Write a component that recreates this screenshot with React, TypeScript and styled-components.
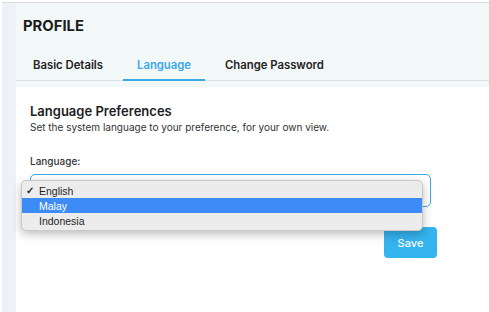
import React from 'react';
import styled, { createGlobalStyle } from 'styled-components';

const GlobalStyle = createGlobalStyle`
  html, body {
    margin: 0;
    padding: 0;
    background: #ffffff;
    font-family: Inter, "Liberation Sans", Arial, sans-serif;
    color: #1d1d1f;
  }
`;

const Page = styled.div`
  width: 489px;
  height: 312px;
  padding: 2px 0 0 2px;
  box-sizing: border-box;
  overflow: hidden;
  display: flex;
  flex-direction: column;
`;

const Frame = styled.div`
  flex: 1;
  display: flex;
  border-top: 1px solid #d8dde1;
`;

const SideStrip = styled.div`
  width: 14px;
  background: #eef1f7;
`;

const Main = styled.div`
  flex: 1;
  display: flex;
  flex-direction: column;
`;

const Header = styled.div`
  background: #f2f7f8;
  padding: 13px 0 6px 0;
`;

const Title = styled.h1`
  margin: 0 0 13px 7px;
  font-size: 14.8px;
  line-height: 20px;
  font-weight: 700;
  color: #1b1b1b;
`;

const TabRow = styled.div`
  display: flex;
  gap: 6px;
  padding-left: 3px;
  border-bottom: 1px solid #d9e1e6;
`;

const Tab = styled.div<{ $active?: boolean }>`
  padding: 8px 14px 6px;
  margin-bottom: -1px;
  font-size: 11.3px;
  line-height: 16px;
  font-weight: 600;
  color: ${p => (p.$active ? '#3aa9e6' : '#222222')};
  border-bottom: 2px solid ${p => (p.$active ? '#3aa9e6' : 'transparent')};
`;

const Card = styled.div`
  flex: 1;
  background: #ffffff;
  padding: 16px 0 0 14px;
`;

const SectionTitle = styled.h2`
  margin: 0;
  font-size: 13px;
  line-height: 17px;
  font-weight: 600;
  color: #1d1d1f;
`;

const SectionHint = styled.p`
  margin: 0;
  font-size: 10px;
  line-height: 14px;
  color: #333333;
`;

const Form = styled.div`
  width: 407px;
  margin-top: 20px;
  display: flex;
  flex-direction: column;
`;

const Label = styled.label`
  font-size: 10px;
  line-height: 14px;
  font-weight: 500;
  color: #333333;
`;

const SelectWrap = styled.div`
  position: relative;
  margin-top: 6px;
  width: 401px;
`;

const SelectBox = styled.div`
  height: 33px;
  box-sizing: border-box;
  border: 1.5px solid #3aa9e6;
  border-radius: 5px;
  background: #ffffff;
`;

const Popup = styled.ul`
  position: absolute;
  left: -9px;
  top: 6px;
  width: 402px;
  margin: 0;
  padding: 2px 0;
  list-style: none;
  background: #ececec;
  border: 1px solid #c9c9c9;
  border-radius: 5px;
  box-sizing: border-box;
  box-shadow: 0 3px 8px rgba(0, 0, 0, 0.22), 0 4px 16px rgba(0, 0, 0, 0.05);
  font-family: "Liberation Sans", Arial, sans-serif;
`;

const Option = styled.li<{ $highlight?: boolean }>`
  display: flex;
  align-items: center;
  height: 15px;
  padding-left: 4px;
  font-size: 10.5px;
  color: ${p => (p.$highlight ? '#ffffff' : '#1f1f1f')};
  background: ${p => (p.$highlight ? '#3d8bf7' : 'transparent')};
`;

const Check = styled.span`
  width: 13px;
  font-size: 10px;
  font-weight: 700;
`;

const SaveButton = styled.button`
  align-self: flex-end;
  margin-top: 20px;
  width: 53px;
  height: 31px;
  border: none;
  border-radius: 4px;
  background: #35b4ef;
  color: #ffffff;
  font-family: Inter, "Liberation Sans", Arial, sans-serif;
  font-size: 11px;
  font-weight: 500;
`;

const languages = ['English', 'Malay', 'Indonesia'];

export default function App() {
  const selected = 'English';
  const hovered = 'Malay';
  return (
    <Page>
      <GlobalStyle />
      <Frame>
        <SideStrip />
        <Main>
          <Header>
            <Title>PROFILE</Title>
            <TabRow>
              <Tab>Basic Details</Tab>
              <Tab $active>Language</Tab>
              <Tab>Change Password</Tab>
            </TabRow>
          </Header>
          <Card>
            <SectionTitle>Language Preferences</SectionTitle>
            <SectionHint>Set the system language to your preference, for your own view.</SectionHint>
            <Form>
              <Label>Language:</Label>
              <SelectWrap>
                <SelectBox />
                <Popup>
                  {languages.map(lang => (
                    <Option key={lang} $highlight={lang === hovered}>
                      <Check>{lang === selected ? '✓' : ''}</Check>
                      {lang}
                    </Option>
                  ))}
                </Popup>
              </SelectWrap>
              <SaveButton>Save</SaveButton>
            </Form>
          </Card>
        </Main>
      </Frame>
    </Page>
  );
}
